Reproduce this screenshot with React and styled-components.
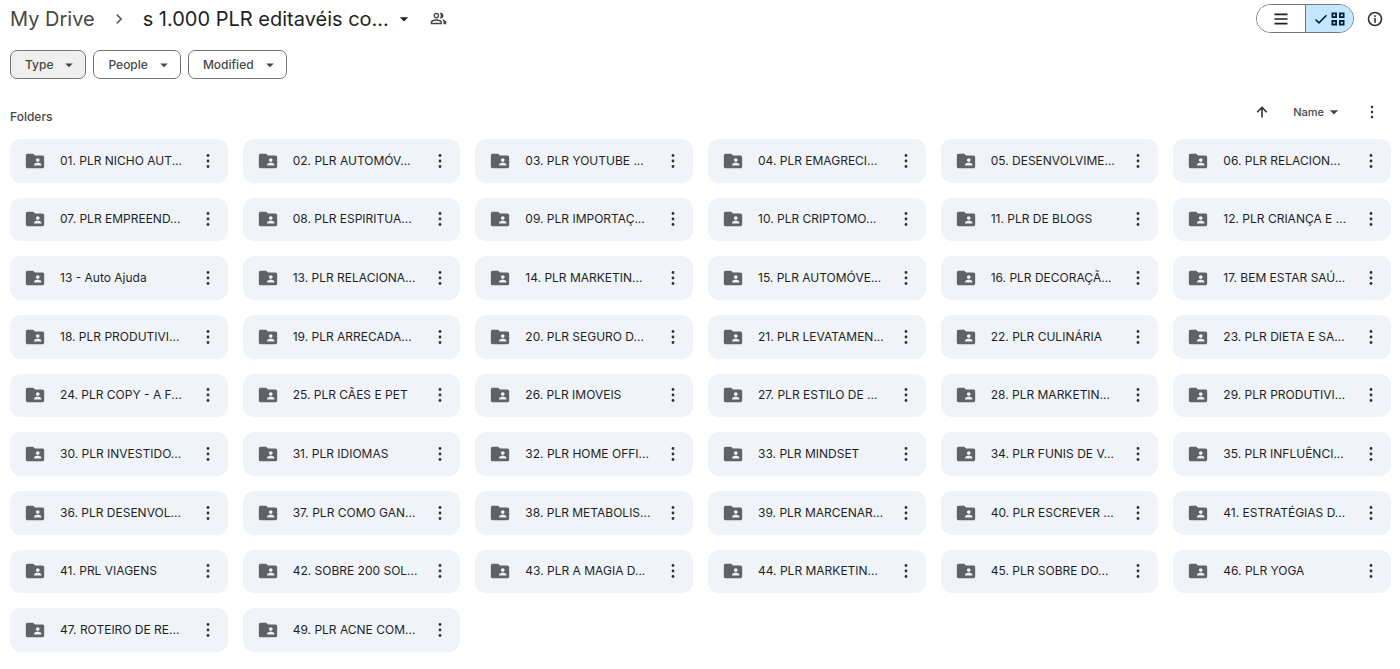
import React, { useState } from 'react';
import styled, { createGlobalStyle } from 'styled-components';
import {
  MdArrowDropDown,
  MdChevronRight,
  MdFolderShared,
  MdOutlinePeopleAlt,
} from 'react-icons/md';

const GlobalStyle = createGlobalStyle`
  * {
    box-sizing: border-box;
  }

  body {
    margin: 0;
    background: #fff;
    color: #1f1f1f;
    font-family: Inter, Roboto, sans-serif;
  }

  button {
    font: inherit;
    color: inherit;
    padding: 0;
    border: 0;
    background: none;
    cursor: pointer;
  }

  svg {
    display: block;
    flex-shrink: 0;
  }
`;

const Page = styled.div`
  display: flex;
  flex-direction: column;
  min-height: 100vh;
  padding: 3px 9px 17px 10px;
`;

const Header = styled.header`
  display: flex;
  justify-content: space-between;
  align-items: center;
  height: 31px;
  padding-right: 7px;
`;

const Breadcrumbs = styled.nav`
  display: flex;
  align-items: center;
  font-size: 20px;
  line-height: 28px;
  white-space: nowrap;
`;

const ParentLink = styled.a`
  color: #444746;
  text-decoration: none;
`;

const Separator = styled.span`
  margin: 0 14px;
  color: #5f6368;
`;

const CurrentFolder = styled.button`
  display: flex;
  align-items: center;
  gap: 5px;
`;

const ShareButton = styled.button`
  margin-left: 16px;
  color: #444746;
`;

const HeaderActions = styled.div`
  display: flex;
  align-items: center;
  gap: 12px;
`;

const ViewToggle = styled.div`
  display: flex;
  width: 98px;
  height: 29px;
  border: 1px solid #747775;
  border-radius: 15px;
  overflow: hidden;
`;

const ToggleButton = styled.button`
  display: flex;
  flex: 1;
  align-items: center;
  justify-content: center;
  gap: 3px;
  color: ${({ $active }) => ($active ? '#001d35' : '#1f1f1f')};
  background: ${({ $active }) => ($active ? '#c2e7ff' : '#fff')};

  & + & {
    border-left: 1px solid #747775;
  }
`;

const IconButton = styled.button`
  color: #303232;
`;

const Filters = styled.div`
  display: flex;
  gap: 7px;
  margin-top: 16px;
`;

const FilterChip = styled.button`
  display: flex;
  align-items: center;
  gap: 7px;
  height: 29px;
  padding: 0 7px 0 14px;
  border: 1px solid #747775;
  border-radius: 7px;
  background: ${({ $active }) => ($active ? '#efefef' : '#fff')};
  color: #444746;
  font-size: 12px;
  font-weight: 500;
`;

const SectionBar = styled.div`
  display: flex;
  justify-content: space-between;
  align-items: center;
  height: 36px;
  margin: 15px 0 9px;
  padding-right: 10px;
`;

const SectionTitle = styled.h2`
  margin: 8px 0 0;
  color: #444746;
  font-size: 12px;
  font-weight: 500;
`;

const SortControls = styled.div`
  display: flex;
  align-items: center;
  color: #444746;
`;

const SortButton = styled.button`
  display: flex;
  align-items: center;
  margin: 0 19px 0 23px;
  font-size: 11px;
  font-weight: 500;
`;

const FolderGrid = styled.ul`
  display: grid;
  flex: 1;
  grid-template-columns: repeat(6, minmax(0, 1fr));
  grid-auto-rows: 1fr;
  gap: 15px;
  margin: 0;
  padding: 0;
  list-style: none;
`;

const FolderCard = styled.li`
  display: flex;
  align-items: center;
  padding: 0 10px 0 14px;
  border-radius: 11px;
  background: #f0f4f9;
`;

const FolderName = styled.span`
  flex: 1;
  min-width: 0;
  margin-left: 14px;
  overflow: hidden;
  color: #1f1f1f;
  font-size: 12px;
  line-height: 20px;
  white-space: nowrap;
`;

const folders = [
  '01. PLR NICHO AUT...',
  '02. PLR AUTOMÓV...',
  '03. PLR YOUTUBE ...',
  '04. PLR EMAGRECI...',
  '05. DESENVOLVIME...',
  '06. PLR RELACION...',
  '07. PLR EMPREEND...',
  '08. PLR ESPIRITUA...',
  '09. PLR IMPORTAÇ...',
  '10. PLR CRIPTOMO...',
  '11. PLR DE BLOGS',
  '12. PLR CRIANÇA E ...',
  '13 - Auto Ajuda',
  '13. PLR RELACIONA...',
  '14. PLR MARKETIN...',
  '15. PLR AUTOMÓVE...',
  '16. PLR DECORAÇÃ...',
  '17. BEM ESTAR SAÚ...',
  '18. PLR PRODUTIVI...',
  '19. PLR ARRECADA...',
  '20. PLR SEGURO D...',
  '21. PLR LEVATAMEN...',
  '22. PLR CULINÁRIA',
  '23. PLR DIETA E SA...',
  '24. PLR COPY - A F...',
  '25. PLR CÃES E PET',
  '26. PLR IMOVEIS',
  '27. PLR ESTILO DE ...',
  '28. PLR MARKETIN...',
  '29. PLR PRODUTIVI...',
  '30. PLR INVESTIDO...',
  '31. PLR IDIOMAS',
  '32. PLR HOME OFFI...',
  '33. PLR MINDSET',
  '34. PLR FUNIS DE V...',
  '35. PLR INFLUÊNCI...',
  '36. PLR DESENVOL...',
  '37. PLR COMO GAN...',
  '38. PLR METABOLIS...',
  '39. PLR MARCENAR...',
  '40. PLR ESCREVER ...',
  '41. ESTRATÉGIAS D...',
  '41. PRL VIAGENS',
  '42. SOBRE 200 SOL...',
  '43. PLR A MAGIA D...',
  '44. PLR MARKETIN...',
  '45. PLR SOBRE DO...',
  '46. PLR YOGA',
  '47. ROTEIRO DE RE...',
  '49. PLR ACNE COM...',
];

const filters = ['Type', 'People', 'Modified'];

const MoreIcon = ({ size }) => (
  <svg width={size} height={size} viewBox="0 0 20 20" fill="currentColor">
    <circle cx="10" cy="4.5" r="1.4" />
    <circle cx="10" cy="10" r="1.4" />
    <circle cx="10" cy="15.5" r="1.4" />
  </svg>
);

const ListIcon = () => (
  <svg width="14" height="14" viewBox="0 0 14 14" stroke="currentColor" strokeWidth="1.7">
    <path d="M.5 2.3h13M.5 7h13M.5 11.7h13" />
  </svg>
);

const CheckIcon = () => (
  <svg width="14" height="14" viewBox="0 0 14 14" fill="none" stroke="currentColor" strokeWidth="1.5">
    <path d="M1.5 7.5l3.5 3.4 7.5-7.6" />
  </svg>
);

const GridIcon = () => (
  <svg width="14" height="14" viewBox="0 0 14 14" fill="none" stroke="currentColor" strokeWidth="1.8">
    <rect x="1.4" y="1.4" width="3.7" height="3.7" />
    <rect x="8.9" y="1.4" width="3.7" height="3.7" />
    <rect x="1.4" y="8.9" width="3.7" height="3.7" />
    <rect x="8.9" y="8.9" width="3.7" height="3.7" />
  </svg>
);

const InfoIcon = () => (
  <svg width="18" height="18" viewBox="0 0 18 18" fill="none" stroke="currentColor" strokeWidth="1.6">
    <circle cx="9" cy="9" r="6.5" />
    <path d="M9 8v4.8M9 5.2v1.7" />
  </svg>
);

const ArrowUpIcon = () => (
  <svg width="16" height="16" viewBox="0 0 16 16" fill="none" stroke="currentColor" strokeWidth="1.6">
    <path d="M8 13.5V3.6M3.2 8.2L8 3.4l4.8 4.8" />
  </svg>
);

function Folder({ name }) {
  return (
    <FolderCard>
      <MdFolderShared size={22} color="#5f6368" />
      <FolderName>{name}</FolderName>
      <IconButton aria-label={`More actions for ${name}`}>
        <MoreIcon size={20} />
      </IconButton>
    </FolderCard>
  );
}

function App() {
  const [view, setView] = useState('grid');

  return (
    <>
      <GlobalStyle />
      <Page>
        <Header>
          <Breadcrumbs aria-label="Breadcrumb">
            <ParentLink href="#my-drive">My Drive</ParentLink>
            <Separator>
              <MdChevronRight size={20} />
            </Separator>
            <CurrentFolder>
              s 1.000 PLR editavéis co...
              <MdArrowDropDown size={20} />
            </CurrentFolder>
            <ShareButton aria-label="Manage access">
              <MdOutlinePeopleAlt size={17} />
            </ShareButton>
          </Breadcrumbs>
          <HeaderActions>
            <ViewToggle>
              <ToggleButton
                aria-label="List layout"
                $active={view === 'list'}
                onClick={() => setView('list')}
              >
                <ListIcon />
              </ToggleButton>
              <ToggleButton
                aria-label="Grid layout"
                $active={view === 'grid'}
                onClick={() => setView('grid')}
              >
                <CheckIcon />
                <GridIcon />
              </ToggleButton>
            </ViewToggle>
            <IconButton aria-label="View details">
              <InfoIcon />
            </IconButton>
          </HeaderActions>
        </Header>

        <Filters>
          {filters.map((label) => (
            <FilterChip key={label} $active={label === 'Type'}>
              {label}
              <MdArrowDropDown size={18} />
            </FilterChip>
          ))}
        </Filters>

        <SectionBar>
          <SectionTitle>Folders</SectionTitle>
          <SortControls>
            <IconButton aria-label="Reverse sort direction">
              <ArrowUpIcon />
            </IconButton>
            <SortButton>
              Name
              <MdArrowDropDown size={20} />
            </SortButton>
            <IconButton aria-label="More sort options">
              <MoreIcon size={18} />
            </IconButton>
          </SortControls>
        </SectionBar>

        <FolderGrid>
          {folders.map((name) => (
            <Folder key={name} name={name} />
          ))}
        </FolderGrid>
      </Page>
    </>
  );
}

export default App;
